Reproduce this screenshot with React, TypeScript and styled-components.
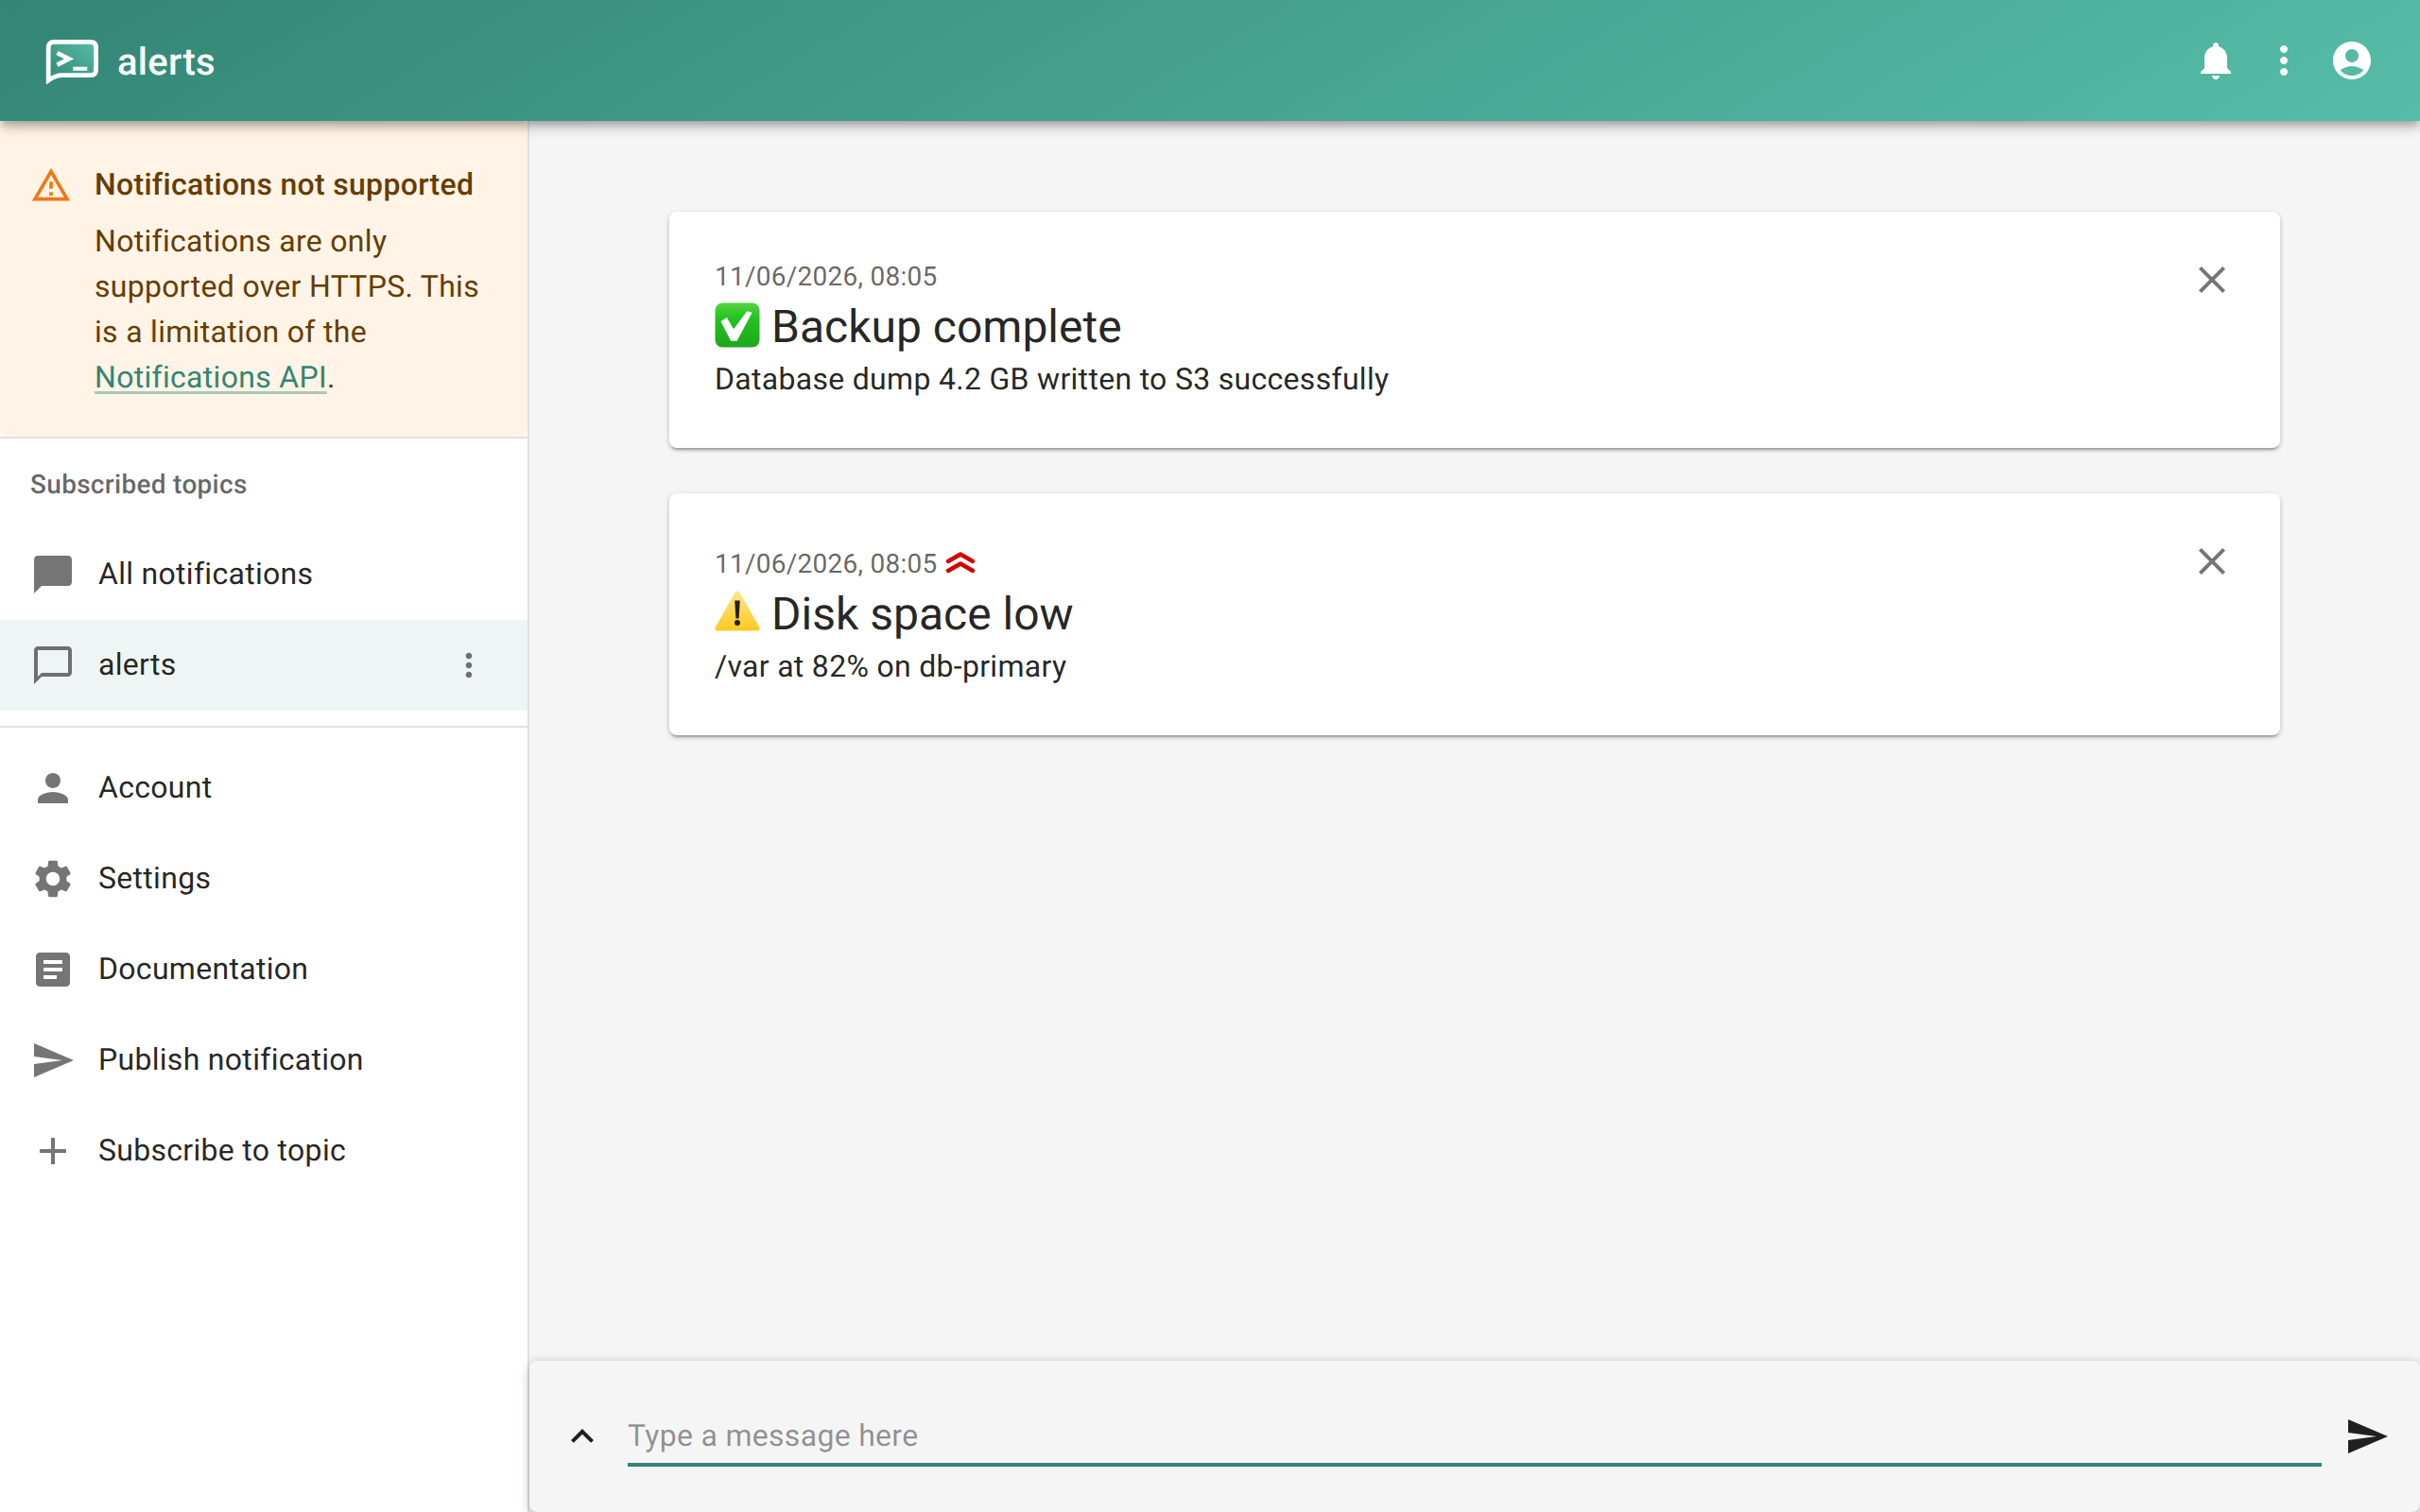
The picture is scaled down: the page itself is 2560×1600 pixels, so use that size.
import React from "react"
import styled, { createGlobalStyle } from "styled-components"

const GlobalStyle = createGlobalStyle`
  html, body, #root {
    margin: 0;
    height: 100%;
  }

  body {
    font-family: Roboto, "Liberation Sans", sans-serif;
    font-size: 32px;
    letter-spacing: 0.3px;
    color: rgba(0, 0, 0, 0.87);
    background: #f5f5f5;
    overflow: hidden;
    text-rendering: geometricPrecision;
  }

  * {
    box-sizing: border-box;
  }
`

const Page = styled.div`
  display: flex;
  flex-direction: column;
  height: 1600px;
`

const AppBar = styled.header`
  position: relative;
  z-index: 2;
  flex: none;
  display: flex;
  align-items: center;
  height: 128px;
  padding: 0 36px 0 48px;
  color: #fff;
  background: linear-gradient(150deg, #338574 0%, #56bda8 100%);
  box-shadow: 0 4px 8px -2px rgba(0, 0, 0, 0.2), 0 8px 10px 0 rgba(0, 0, 0, 0.14),
    0 2px 20px 0 rgba(0, 0, 0, 0.12);
`

const LogoWrap = styled.div`
  display: flex;
  margin-top: 4px;
`

const AppTitle = styled.div`
  flex: 1;
  margin-left: 20px;
  padding-top: 3px;
  font-size: 40px;
  font-weight: 500;
  line-height: 64px;
`

const BarButton = styled.div`
  display: flex;
  align-items: center;
  justify-content: center;
  width: 72px;
  height: 72px;
`

const Body = styled.div`
  flex: 1;
  display: flex;
  min-height: 0;
`

const Sidebar = styled.aside`
  flex: none;
  width: 560px;
  background: #fff;
  border-right: 2px solid rgba(0, 0, 0, 0.12);
`

const WarningBox = styled.div`
  display: flex;
  height: 334px;
  padding: 32px 32px 0;
  color: #663c00;
  background: #fff4e5;
  border-radius: 8px;
`

const WarningIcon = styled.div`
  flex: none;
  height: 44px;
  margin: 14px 24px 0 0;
  color: #ed6c02;
  opacity: 0.9;
`

const WarningText = styled.div`
  padding-top: 11px;
  line-height: 48px;
`

const WarningTitle = styled.div`
  margin-bottom: 12px;
  font-weight: 500;
`

const WarningLink = styled.a`
  color: #338574;
  text-decoration: underline;
  text-decoration-color: rgba(51, 133, 116, 0.4);
  text-underline-offset: 4px;
`

const Divider = styled.hr`
  height: 2px;
  margin: 0;
  border: 0;
  background: rgba(0, 0, 0, 0.12);
`

const SubHeader = styled.div`
  height: 96px;
  padding-left: 32px;
  font-size: 28px;
  font-weight: 500;
  line-height: 98px;
  color: rgba(0, 0, 0, 0.6);
`

const Nav = styled.nav<{ $top?: number; $bottom?: number }>`
  padding: ${(p) => p.$top ?? 0}px 0 ${(p) => p.$bottom ?? 0}px;
`

const NavItem = styled.div<{ $selected?: boolean }>`
  display: flex;
  align-items: center;
  height: 96px;
  padding: 0 32px;
  background: ${(p) => (p.$selected ? "rgba(51, 133, 116, 0.08)" : "transparent")};
  color: rgba(0, 0, 0, 0.87);
`

const NavIcon = styled.div`
  flex: none;
  display: flex;
  width: 72px;
  color: rgba(0, 0, 0, 0.54);
`

const NavText = styled.div`
  flex: 1;
  padding-bottom: 2px;
  line-height: 48px;
`

const NavAction = styled.div`
  flex: none;
  display: flex;
  padding-right: 10px;
  color: rgba(0, 0, 0, 0.54);
`

const Main = styled.main`
  flex: 1;
  display: flex;
  flex-direction: column;
  min-width: 0;
`

const Feed = styled.div`
  flex: 1;
  display: flex;
  flex-direction: column;
  gap: 48px;
  width: 1800px;
  margin: 0 auto;
  padding: 96px 48px 0;
`

const Card = styled.article`
  position: relative;
  padding: 48px 48px 49px;
  background: #fff;
  border-radius: 8px;
  box-shadow: 0 4px 2px -2px rgba(0, 0, 0, 0.2), 0 2px 4px 0 rgba(0, 0, 0, 0.14),
    0 2px 6px 0 rgba(0, 0, 0, 0.12);
`

const CloseButton = styled.div`
  position: absolute;
  top: 48px;
  right: 48px;
  display: flex;
  color: rgba(0, 0, 0, 0.54);
`

const DateLine = styled.div<{ $raised?: boolean }>`
  margin-bottom: -1px;
  padding-top: ${(p) => (p.$raised ? 7 : 1)}px;
  font-size: 28px;
  line-height: 40px;
  letter-spacing: 0.26px;
  color: rgba(0, 0, 0, 0.6);
`

const PriorityIcon = styled.svg`
  position: relative;
  top: -2px;
  margin-left: 8px;
  vertical-align: middle;
`

const Title = styled.div`
  display: flex;
  align-items: center;
  gap: 12px;
  height: 64px;
  font-size: 48px;
  font-weight: 400;
  line-height: 64px;
  letter-spacing: 0;
`

const TitleText = styled.span`
  padding-top: 4px;
`

const Message = styled.div`
  padding-top: 1px;
  line-height: 48px;
`

const Composer = styled.div`
  flex: none;
  display: flex;
  align-items: center;
  height: 160px;
  background: #f5f5f5;
  border-radius: 8px;
  box-shadow: 0 6px 6px -4px rgba(0, 0, 0, 0.2), 0 2px 10px 0 rgba(0, 0, 0, 0.14),
    0 2px 14px 0 rgba(0, 0, 0, 0.12);
`

const ExpandButton = styled.div`
  flex: none;
  display: flex;
  justify-content: center;
  width: 104px;
  padding: 0 8px 0 16px;
  color: rgba(0, 0, 0, 0.87);
`

const MessageInput = styled.input`
  flex: 1;
  height: 56px;
  margin-top: 8px;
  padding: 0 0 6px;
  font: 400 32px Roboto, sans-serif;
  letter-spacing: 0.3px;
  text-rendering: geometricPrecision;
  color: rgba(0, 0, 0, 0.87);
  background: transparent;
  border: 0;
  border-bottom: 4px solid #338574;
  outline: none;

  &::placeholder {
    color: rgba(0, 0, 0, 0.42);
    opacity: 1;
  }
`

const SendButton = styled.div`
  flex: none;
  display: flex;
  justify-content: center;
  width: 96px;
  margin-right: 8px;
  color: rgba(0, 0, 0, 0.87);
`

const paths = {
  bell: "M12 22c1.1 0 2-.9 2-2h-4c0 1.1.89 2 2 2zm6-6v-5c0-3.07-1.64-5.64-4.5-6.32V4c0-.83-.67-1.5-1.5-1.5s-1.5.67-1.5 1.5v.68C7.63 5.36 6 7.92 6 11v5l-2 2v1h16v-1l-2-2z",
  more: "M12 8c1.1 0 2-.9 2-2s-.9-2-2-2-2 .9-2 2 .9 2 2 2zm0 2c-1.1 0-2 .9-2 2s.9 2 2 2 2-.9 2-2-.9-2-2-2zm0 6c-1.1 0-2 .9-2 2s.9 2 2 2 2-.9 2-2-.9-2-2-2z",
  account:
    "M12 2C6.48 2 2 6.48 2 12s4.48 10 10 10 10-4.48 10-10S17.52 2 12 2zm0 4c1.93 0 3.5 1.57 3.5 3.5S13.93 13 12 13s-3.5-1.57-3.5-3.5S10.07 6 12 6zm0 14c-2.03 0-4.43-.82-6.14-2.88C7.55 15.8 9.68 15 12 15s4.45.8 6.14 2.12C16.43 19.18 14.03 20 12 20z",
  warning: "M12 5.99 19.53 19H4.47L12 5.99M12 2 1 21h22L12 2zm1 14h-2v2h2v-2zm0-6h-2v4h2v-4z",
  chat: "M20 2H4c-1.1 0-1.99.9-1.99 2L2 22l4-4h14c1.1 0 2-.9 2-2V4c0-1.1-.9-2-2-2z",
  chatOutline: "M20 2H4c-1.1 0-2 .9-2 2v18l4-4h14c1.1 0 2-.9 2-2V4c0-1.1-.9-2-2-2zm0 14H6l-2 2V4h16v12z",
  person: "M12 12c2.21 0 4-1.79 4-4s-1.79-4-4-4-4 1.79-4 4 1.79 4 4 4zm0 2c-2.67 0-8 1.34-8 4v2h16v-2c0-2.66-5.33-4-8-4z",
  settings:
    "M19.14 12.94c.04-.3.06-.61.06-.94 0-.32-.02-.64-.07-.94l2.03-1.58c.18-.14.23-.41.12-.61l-1.92-3.32c-.12-.22-.37-.29-.59-.22l-2.39.96c-.5-.38-1.03-.7-1.62-.94l-.36-2.54c-.04-.24-.24-.41-.48-.41h-3.84c-.24 0-.43.17-.47.41l-.36 2.54c-.59.24-1.13.57-1.62.94l-2.39-.96c-.22-.08-.47 0-.59.22L2.74 8.87c-.12.21-.08.47.12.61l2.03 1.58c-.05.3-.09.63-.09.94s.02.64.07.94l-2.03 1.58c-.18.14-.23.41-.12.61l1.92 3.32c.12.22.37.29.59.22l2.39-.96c.5.38 1.03.7 1.62.94l.36 2.54c.05.24.24.41.48.41h3.84c.24 0 .44-.17.47-.41l.36-2.54c.59-.24 1.13-.56 1.62-.94l2.39.96c.22.08.47 0 .59-.22l1.92-3.32c.12-.22.07-.47-.12-.61l-2.01-1.58zM12 15.6c-1.98 0-3.6-1.62-3.6-3.6s1.62-3.6 3.6-3.6 3.6 1.62 3.6 3.6-1.62 3.6-3.6 3.6z",
  article: "M19 3H5c-1.1 0-2 .9-2 2v14c0 1.1.9 2 2 2h14c1.1 0 2-.9 2-2V5c0-1.1-.9-2-2-2zm-5 14H7v-2h7v2zm3-4H7v-2h10v2zm0-4H7V7h10v2z",
  send: "M2.01 21 23 12 2.01 3 2 10l15 2-15 2z",
  add: "M19 13h-6v6h-2v-6H5v-2h6V5h2v6h6v2z",
  close: "M19 6.41 17.59 5 12 10.59 6.41 5 5 6.41 10.59 12 5 17.59 6.41 19 12 13.41 17.59 19 19 17.59 13.41 12z",
  up: "M7.41 15.41 12 10.83l4.59 4.58L18 14l-6-6-6 6z",
}

const Icon = ({ d, size = 48 }: { d: string; size?: number }) => (
  <svg width={size} height={size} viewBox="0 0 24 24" fill="currentColor" style={{ display: "block" }}>
    <path d={d} />
  </svg>
)

const Logo = () => (
  <svg width="56" height="48" viewBox="0 0 56 48">
    <defs>
      <linearGradient id="logoFill" x1="0" y1="1" x2="1" y2="0">
        <stop offset="0" stopColor="#338574" />
        <stop offset="1" stopColor="#56bda8" />
      </linearGradient>
    </defs>
    <path
      d="M9 2.4H47.7Q53.6 2.4 53.6 8.3V31.7Q53.6 37.6 47.7 37.6H17Q11 37.6 3.2 43V8.3Q3.2 2.4 9 2.4Z"
      fill="url(#logoFill)"
      stroke="#fff"
      strokeWidth="4.8"
    />
    <path d="M12.5 14L25 20.3L12.5 26.6" fill="none" stroke="#fff" strokeWidth="4.6" />
    <rect x="29.3" y="28.7" width="15" height="4" fill="#fff" />
  </svg>
)

const CheckEmoji = () => (
  <svg width="48" height="48" viewBox="0 0 48 48" role="img" aria-label="✅">
    <defs>
      <linearGradient id="checkFill" x1="0" y1="0" x2="0" y2="1">
        <stop offset="0" stopColor="#55d444" />
        <stop offset="0.35" stopColor="#24c21f" />
        <stop offset="1" stopColor="#1ea61e" />
      </linearGradient>
    </defs>
    <rect x="0.5" y="0.5" width="47" height="47" rx="8" fill="url(#checkFill)" />
    <path d="M6.4 20L12.9 16L20 28.3L34.3 9.3L39.6 10.7L23.6 40.7H17.1Z" fill="#fff" />
  </svg>
)

const WarningEmoji = () => (
  <svg width="48" height="48" viewBox="0 0 48 48" role="img" aria-label="⚠️">
    <defs>
      <linearGradient id="warnFill" x1="0" y1="0" x2="0" y2="1">
        <stop offset="0" stopColor="#ffe58a" />
        <stop offset="1" stopColor="#ffc91f" />
      </linearGradient>
    </defs>
    <path
      d="M21.5 3Q24 0 26.5 3L47 39.5Q48.5 43.5 45 43.5H3Q-0.5 43.5 1 39.5Z"
      fill="url(#warnFill)"
    />
    <path d="M21.2 11.5H26.8L25.6 30.5H22.4Z" fill="#222" />
    <circle cx="24" cy="35" r="3" fill="#222" />
  </svg>
)

const navItems = [
  { label: "Account", icon: paths.person },
  { label: "Settings", icon: paths.settings },
  { label: "Documentation", icon: paths.article },
  { label: "Publish notification", icon: paths.send },
  { label: "Subscribe to topic", icon: paths.add },
]

const App: React.FC = () => (
  <Page>
    <GlobalStyle />
    <AppBar>
      <LogoWrap>
        <Logo />
      </LogoWrap>
      <AppTitle>alerts</AppTitle>
      <BarButton>
        <Icon d={paths.bell} />
      </BarButton>
      <BarButton>
        <Icon d={paths.more} />
      </BarButton>
      <BarButton>
        <Icon d={paths.account} />
      </BarButton>
    </AppBar>
    <Body>
      <Sidebar>
        <WarningBox>
          <WarningIcon>
            <Icon d={paths.warning} size={44} />
          </WarningIcon>
          <WarningText>
            <WarningTitle>Notifications not supported</WarningTitle>
            Notifications are only supported over HTTPS. This is a limitation of the{" "}
            <WarningLink href="#">Notifications API</WarningLink>.
          </WarningText>
        </WarningBox>
        <Divider />
        <SubHeader>Subscribed topics</SubHeader>
        <Nav $bottom={16}>
          <NavItem>
            <NavIcon>
              <Icon d={paths.chat} />
            </NavIcon>
            <NavText>All notifications</NavText>
          </NavItem>
          <NavItem $selected>
            <NavIcon>
              <Icon d={paths.chatOutline} />
            </NavIcon>
            <NavText>alerts</NavText>
            <NavAction>
              <Icon d={paths.more} size={40} />
            </NavAction>
          </NavItem>
        </Nav>
        <Divider />
        <Nav $top={16}>
          {navItems.map((item) => (
            <NavItem key={item.label}>
              <NavIcon>
                <Icon d={item.icon} />
              </NavIcon>
              <NavText>{item.label}</NavText>
            </NavItem>
          ))}
        </Nav>
      </Sidebar>
      <Main>
        <Feed>
          <Card>
            <CloseButton>
              <Icon d={paths.close} />
            </CloseButton>
            <DateLine>11/06/2026, 08:05</DateLine>
            <Title>
              <CheckEmoji />
              <TitleText>Backup complete</TitleText>
            </Title>
            <Message>Database dump 4.2 GB written to S3 successfully</Message>
          </Card>
          <Card>
            <CloseButton>
              <Icon d={paths.close} />
            </CloseButton>
            <DateLine $raised>
              11/06/2026, 08:05
              <PriorityIcon width="32" height="32" viewBox="0 0 32 32" fill="none" stroke="#d40000" strokeWidth="4.4" strokeLinecap="round" strokeLinejoin="round">
                <path d="M3 13L16 5.5L29 13" />
                <path d="M3 23L16 15.5L29 23" />
              </PriorityIcon>
            </DateLine>
            <Title>
              <WarningEmoji />
              <TitleText>Disk space low</TitleText>
            </Title>
            <Message>/var at 82% on db-primary</Message>
          </Card>
        </Feed>
        <Composer>
          <ExpandButton>
            <Icon d={paths.up} />
          </ExpandButton>
          <MessageInput placeholder="Type a message here" />
          <SendButton>
            <Icon d={paths.send} />
          </SendButton>
        </Composer>
      </Main>
    </Body>
  </Page>
)

export default App
